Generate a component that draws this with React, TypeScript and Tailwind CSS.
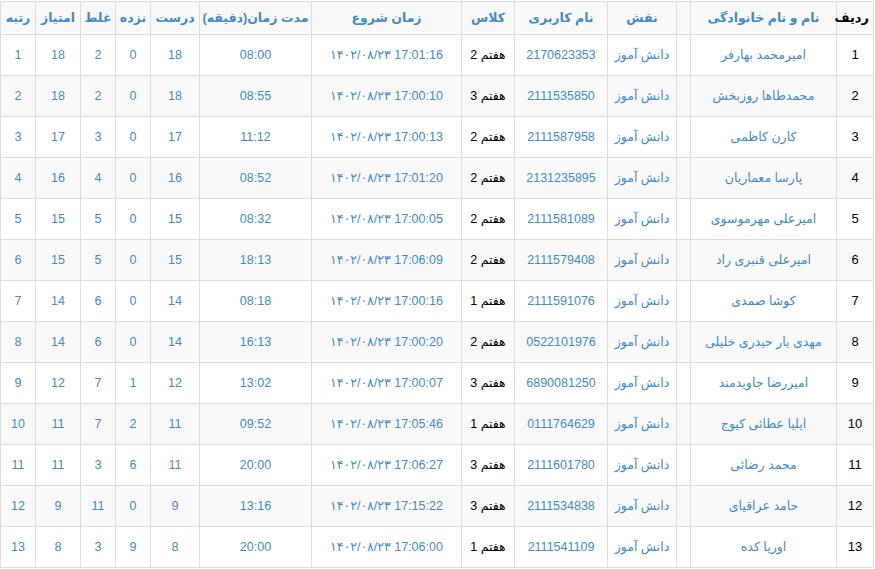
import React from 'react'

type Row = {
  name: string
  user: string
  cls: string
  start: string
  dur: string
  ok: number
  skip: number
  wrong: number
  score: number
  rank: number
}

const date = '۱۴۰۲/۰۸/۲۳'

const rows: Row[] = [
  { name: 'امیرمحمد بهارفر', user: '2170623353', cls: 'هفتم 2', start: '17:01:16', dur: '08:00', ok: 18, skip: 0, wrong: 2, score: 18, rank: 1 },
  { name: 'محمدطاها روزبخش', user: '2111535850', cls: 'هفتم 3', start: '17:00:10', dur: '08:55', ok: 18, skip: 0, wrong: 2, score: 18, rank: 2 },
  { name: 'کارن کاظمی', user: '2111587958', cls: 'هفتم 2', start: '17:00:13', dur: '11:12', ok: 17, skip: 0, wrong: 3, score: 17, rank: 3 },
  { name: 'پارسا معماریان', user: '2131235895', cls: 'هفتم 2', start: '17:01:20', dur: '08:52', ok: 16, skip: 0, wrong: 4, score: 16, rank: 4 },
  { name: 'امیرعلی مهرموسوی', user: '2111581089', cls: 'هفتم 2', start: '17:00:05', dur: '08:32', ok: 15, skip: 0, wrong: 5, score: 15, rank: 5 },
  { name: 'امیرعلی قنبری راد', user: '2111579408', cls: 'هفتم 2', start: '17:06:09', dur: '18:13', ok: 15, skip: 0, wrong: 5, score: 15, rank: 6 },
  { name: 'کوشا صمدی', user: '2111591076', cls: 'هفتم 1', start: '17:00:16', dur: '08:18', ok: 14, skip: 0, wrong: 6, score: 14, rank: 7 },
  { name: 'مهدی یار حیدری خلیلی', user: '0522101976', cls: 'هفتم 2', start: '17:00:20', dur: '16:13', ok: 14, skip: 0, wrong: 6, score: 14, rank: 8 },
  { name: 'امیررضا جاویدمند', user: '6890081250', cls: 'هفتم 3', start: '17:00:07', dur: '13:02', ok: 12, skip: 1, wrong: 7, score: 12, rank: 9 },
  { name: 'ایلیا عطائی کیوج', user: '0111764629', cls: 'هفتم 1', start: '17:05:46', dur: '09:52', ok: 11, skip: 2, wrong: 7, score: 11, rank: 10 },
  { name: 'محمد رضائی', user: '2111601780', cls: 'هفتم 3', start: '17:06:27', dur: '20:00', ok: 11, skip: 6, wrong: 3, score: 11, rank: 11 },
  { name: 'حامد عراقیای', user: '2111534838', cls: 'هفتم 3', start: '17:15:22', dur: '13:16', ok: 9, skip: 0, wrong: 11, score: 9, rank: 12 },
  { name: 'اوریا کده', user: '2111541109', cls: 'هفتم 1', start: '17:06:00', dur: '20:00', ok: 8, skip: 9, wrong: 3, score: 8, rank: 13 },
]

const th = 'border border-[#dddddd] font-bold text-center text-[#428bca] h-[33px] p-0'
const td = 'border border-[#dddddd] text-center text-[#428bca] h-[41px] p-0'

export default function App() {
  return (
    <div className="w-[875px] h-[569px] bg-white overflow-hidden pt-px" style={{ fontFamily: '"Liberation Sans", "DejaVu Sans", sans-serif' }}>
      <table dir="rtl" className="table-fixed border-collapse w-[873px] text-[12.5px]">
        <colgroup>
          <col className="w-[37px]" />
          <col className="w-[146px]" />
          <col className="w-[14px]" />
          <col className="w-[69px]" />
          <col className="w-[93px]" />
          <col className="w-[53px]" />
          <col className="w-[150px]" />
          <col className="w-[112px]" />
          <col className="w-[49px]" />
          <col className="w-[35px]" />
          <col className="w-[35px]" />
          <col className="w-[45px]" />
          <col className="w-[35px]" />
        </colgroup>
        <thead>
          <tr className="bg-[#f9f9f9]">
            <th className="border border-[#dddddd] font-bold text-black text-[13px] h-[33px] p-0 pr-1 text-right">ردیف</th>
            <th className={th}>نام و نام خانوادگی</th>
            <th className={th}></th>
            <th className={th}>نقش</th>
            <th className={th}>نام کاربری</th>
            <th className={th}>کلاس</th>
            <th className={th}>زمان شروع</th>
            <th className={th}>مدت زمان(دقیقه)</th>
            <th className={th}>درست</th>
            <th className={th}>نزده</th>
            <th className={th}>غلط</th>
            <th className={th}>امتیاز</th>
            <th className={th}>رتبه</th>
          </tr>
        </thead>
        <tbody>
          {rows.map((r, i) => (
            <tr key={r.rank} className={i % 2 === 1 ? 'bg-[#f9f9f9]' : 'bg-white'}>
              <td className="border border-[#dddddd] text-center text-black text-[13px] h-[41px] p-0">{i + 1}</td>
              <td className={td}>{r.name}</td>
              <td className={td}></td>
              <td className={td}>دانش آموز</td>
              <td className={td}>{r.user}</td>
              <td className="border border-[#dddddd] text-center text-black h-[41px] p-0">{r.cls}</td>
              <td className={td}>{r.start} {date}</td>
              <td className={td}>{r.dur}</td>
              <td className={td}>{r.ok}</td>
              <td className={td}>{r.skip}</td>
              <td className={td}>{r.wrong}</td>
              <td className={td}>{r.score}</td>
              <td className={td}>{r.rank}</td>
            </tr>
          ))}
        </tbody>
      </table>
    </div>
  )
}
